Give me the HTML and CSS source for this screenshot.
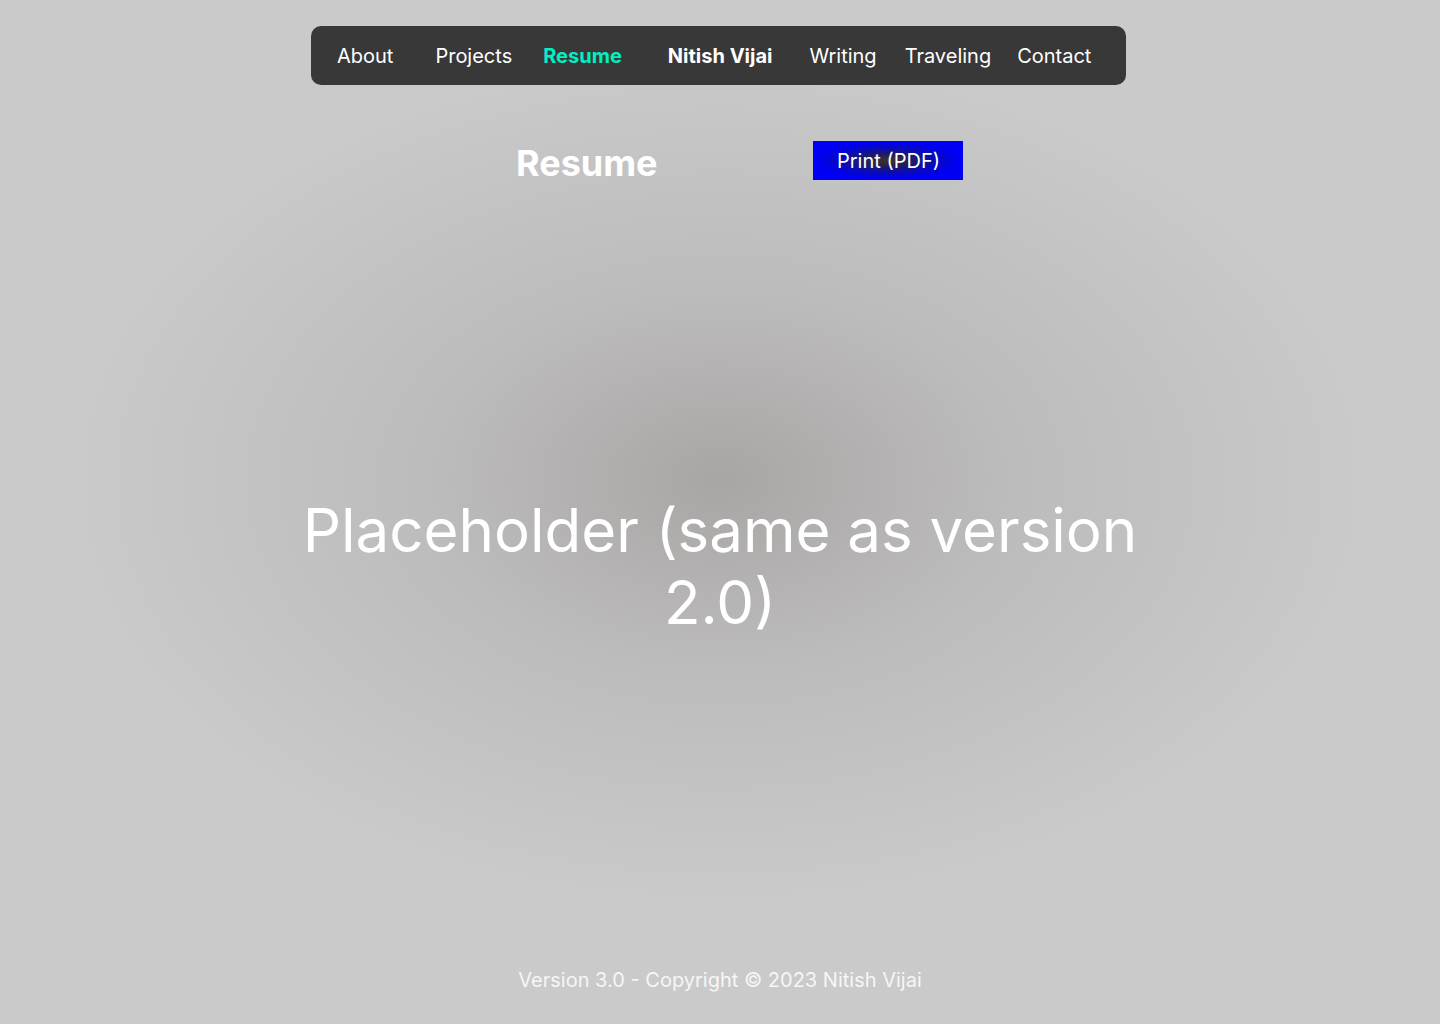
FILE: index.html
```
<!DOCTYPE html>
<html lang="en">
<head>
<meta charset="utf-8">
<title>Resume - Nitish Vijai</title>
<link rel="stylesheet" href="styles.css">
</head>
<body>
<div class="page">
  <nav class="nav">
    <a class="nav-item i-about" href="#">About</a>
    <a class="nav-item i-projects" href="#">Projects</a>
    <a class="nav-item active i-resume" href="#">Resume</a>
    <a class="nav-item brand i-brand" href="#">Nitish Vijai</a>
    <a class="nav-item i-writing" href="#">Writing</a>
    <a class="nav-item i-traveling" href="#">Traveling</a>
    <a class="nav-item i-contact" href="#">Contact</a>
  </nav>
  <header class="head">
    <h1 class="title">Resume</h1>
    <button class="print">Print (PDF)</button>
  </header>
  <main class="main">
    <p class="placeholder">Placeholder (same as version 2.0)</p>
  </main>
  <footer class="footer">Version 3.0 - Copyright © 2023 Nitish Vijai</footer>
</div>
</body>
</html>
```
FILE: styles.css
```
html, body {
  margin: 0;
  padding: 0;
}
body {
  font-family: Inter, "Noto Sans", sans-serif;
  background-color: #cacaca;
  background-image: radial-gradient(ellipse 660px 430px at 720px 480px, #a9a5a5 0%, #bdbcbc 45%, #cacaca 100%);
  color: #fff;
}
.page {
  min-height: 1024px;
  display: flex;
  flex-direction: column;
  align-items: center;
}
.nav {
  margin-top: 26px;
  margin-left: -3px;
  width: 815px;
  height: 59px;
  box-sizing: border-box;
  background: #383838;
  border-radius: 10px;
  display: flex;
  align-items: center;
  padding-left: 26px;
}
.nav-item {
  color: #fff;
  text-decoration: none;
  font-size: 20px;
  line-height: 24px;
  white-space: nowrap;
}
.nav-item.active {
  color: #00f0c4;
  font-weight: 700;
}
.nav-item.brand {
  font-weight: 700;
}
.i-projects { margin-left: 42px; }
.i-resume { margin-left: 31px; }
.i-brand { margin-left: 46px; }
.i-writing { margin-left: 37px; }
.i-traveling { margin-left: 28px; }
.i-contact { margin-left: 26px; }
.head {
  width: 815px;
  margin-left: -3px;
  box-sizing: border-box;
  padding-left: 205px;
  margin-top: 56px;
  display: flex;
  align-items: flex-start;
}
.title {
  margin: 0;
  margin-top: 2px;
  font-size: 36px;
  line-height: 40px;
  font-weight: 700;
  color: #fff;
}
.print {
  margin-left: 155px;
  width: 150px;
  height: 39px;
  border: none;
  padding: 0 0 0 2px;
  font-family: Inter, "Noto Sans", sans-serif;
  font-size: 20px;
  color: #fff;
  background: #0000f2;
  background-image: radial-gradient(ellipse 50% 50% at center, #3e3624 0%, #221d5c 30%, #0a0ab8 62%, #0000f2 92%);
  cursor: pointer;
}
.main {
  flex: 1;
  display: flex;
  align-items: flex-start;
  justify-content: center;
  width: 100%;
}
.placeholder {
  margin: 0;
  margin-top: 311px;
  width: 880px;
  text-align: center;
  font-size: 60px;
  line-height: 72px;
  font-weight: 400;
}
.footer {
  font-size: 20px;
  line-height: 24px;
  color: #f6f6f6;
  margin-bottom: 32px;
}
```
